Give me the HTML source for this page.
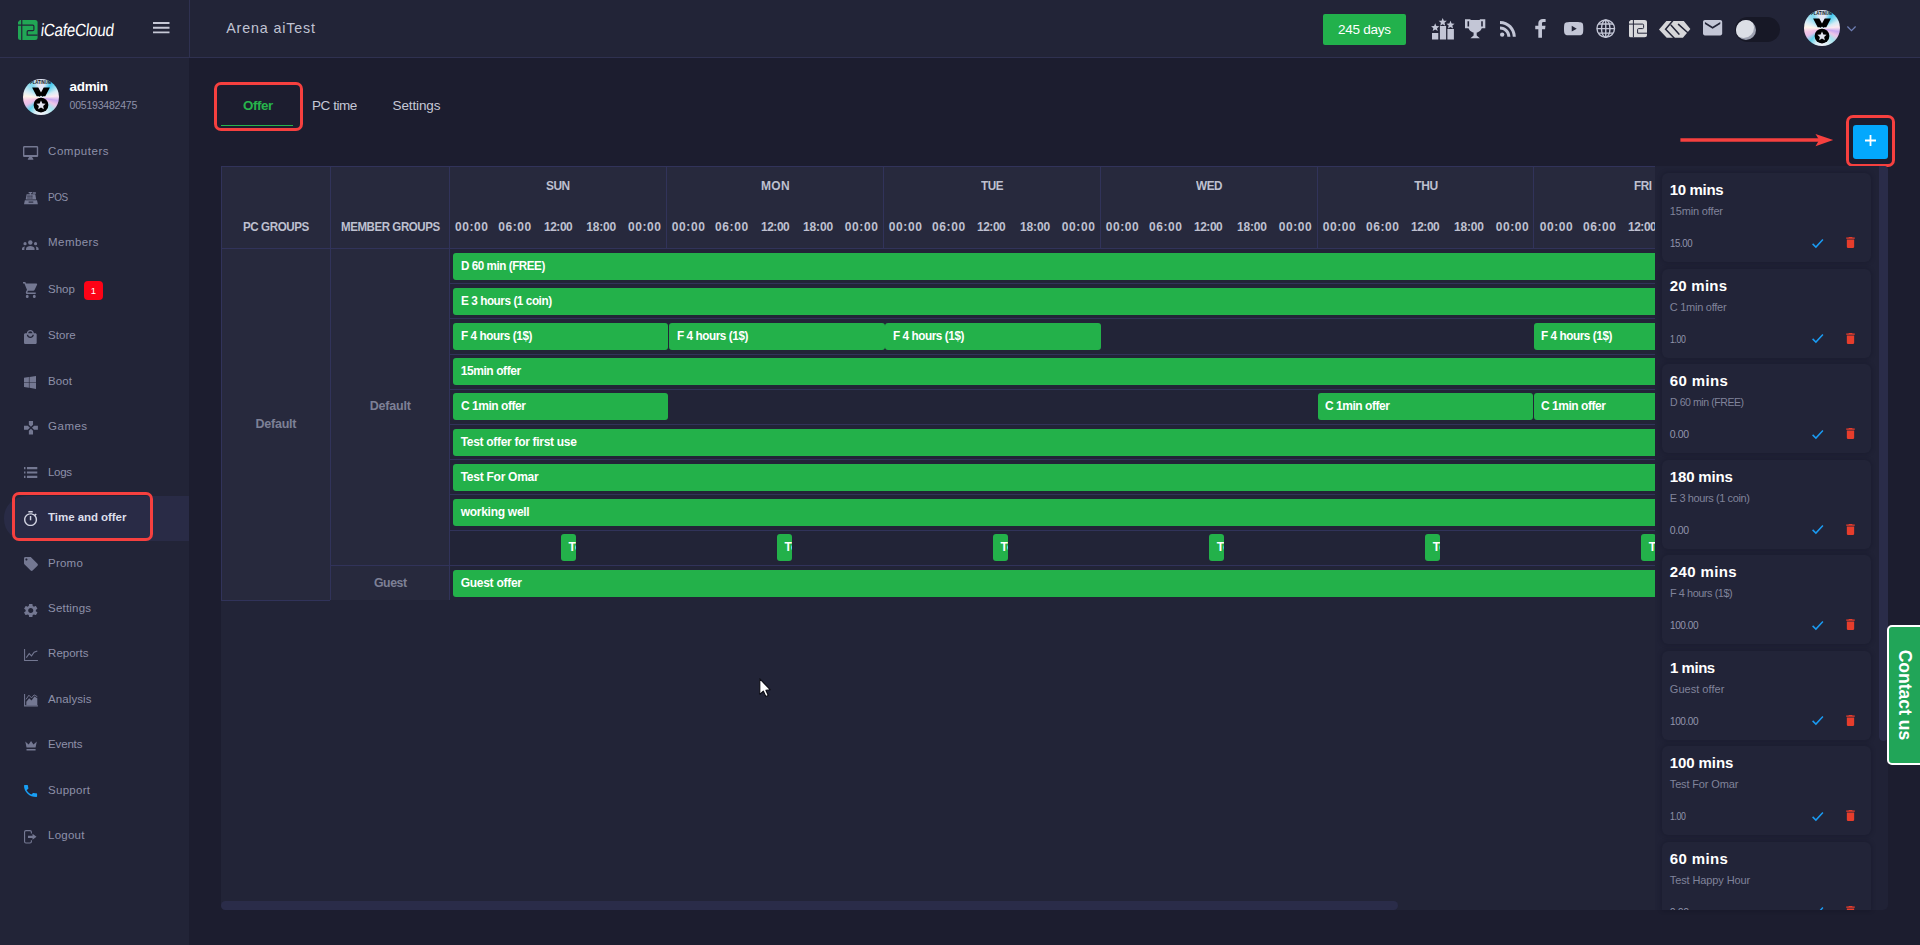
<!DOCTYPE html>
<html lang="en">
<head>
<meta charset="utf-8">
<title>iCafeCloud - Time and offer</title>
<style>
*{box-sizing:border-box;margin:0;padding:0}
html,body{width:1920px;height:945px;overflow:hidden;background:#1c1d2f;font-family:"Liberation Sans",sans-serif;color:#c6c8d6}
.a{position:absolute}
.t{position:absolute;white-space:nowrap}
svg{position:absolute;overflow:visible}
#top{position:absolute;left:0;top:0;width:1920px;height:58px;background:#222437;border-bottom:1px solid #2f3150}
#side{position:absolute;left:0;top:58px;width:189px;height:887px;background:#222437}
#topdiv{position:absolute;left:189px;top:0;width:1px;height:57px;background:#2f3150}
#panel{position:absolute;left:221px;top:166px;width:1434px;height:744px;background:#222437;overflow:hidden;border-radius:4px 0 0 4px}
.hd{position:absolute;background:#27293d}
.vl{position:absolute;width:1px;background:#31335a}
.hl{position:absolute;height:1px;background:#31335a}
.bar{position:absolute;height:27px;background:#23b14a;border-radius:3px;overflow:hidden}
#offers{position:absolute;left:1655px;top:166px;width:233px;height:744px;background:#202236;overflow:hidden;border-radius:0 5px 5px 0}
.card{position:absolute;left:7px;width:209px;height:89px;background:#222438;border-radius:6px;box-shadow:0 0 5px rgba(10,10,25,.32)}
.red{position:absolute;border:3px solid #f6403f;border-radius:7px}
</style>
</head>
<body>
<div id="top"></div><div id="side"></div><div id="topdiv"></div>
<svg style="left:17.800px;top:19.900px" width="19.600" height="20" viewBox="0 0 19.600 20"><path d="M2 0H17.100Q19.600 0 19.600 2.500V17.500Q19.600 20 17.100 20H2.500Q0 20 0 17.500V2z" fill="#21a655"/><path d="M3.750 0V20M0 5.200H14.800Q15.900 5.200 15.900 6.300V9.500Q15.900 10.600 14.800 10.600H10.300Q9.200 10.600 9.200 11.700V15.100H19.600" fill="none" stroke="#222437" stroke-width="1.200"/></svg>
<div class="t" style="left:39.80px;top:18px;font-size:17.5px;line-height:24px;color:#fff;letter-spacing:-0.298px;transform:scaleX(.875) skewX(-7deg);transform-origin:0 80%;">iCafeCloud</div>
<svg style="left:153px;top:22px" width="17" height="12" viewBox="0 0 17 12"><path d="M0 1h16.5M0 5.7h16.5M0 10.4h16.5" stroke="#c6c8d6" stroke-width="1.9"/></svg>
<div class="t" style="left:226.20px;top:18px;font-size:14.3px;line-height:20px;color:#c0c3d3;letter-spacing:0.847px;">Arena aiTest</div>
<div class="t" style="left:69.50px;top:77px;font-size:13.5px;line-height:19px;color:#fff;font-weight:bold;letter-spacing:-0.314px;">admin</div>
<div class="t" style="left:69.50px;top:97px;font-size:10.5px;line-height:16px;color:#8e91a9;letter-spacing:-0.207px;">005193482475</div>
<div class="a" style="left:4px;top:496px;width:185px;height:45px;background:#292b46;border-radius:22px 0 0 22px"></div>
<div class="t" style="left:48.10px;top:143px;font-size:11.5px;line-height:16px;color:#8e91a9;letter-spacing:0.520px;">Computers</div>
<div class="t" style="left:48.10px;top:189px;font-size:11.5px;line-height:16px;color:#8e91a9;letter-spacing:-0.450px;transform:scaleX(0.8638);transform-origin:0 50%;">POS</div>
<div class="t" style="left:48.10px;top:234px;font-size:11.5px;line-height:16px;color:#8e91a9;letter-spacing:0.429px;">Members</div>
<div class="t" style="left:48.10px;top:281px;font-size:11.5px;line-height:16px;color:#8e91a9;letter-spacing:-0.053px;">Shop</div>
<div class="t" style="left:48.10px;top:327px;font-size:11.5px;line-height:16px;color:#8e91a9;letter-spacing:0.028px;">Store</div>
<div class="t" style="left:48.10px;top:373px;font-size:11.5px;line-height:16px;color:#8e91a9;letter-spacing:0.048px;">Boot</div>
<div class="t" style="left:48.10px;top:418px;font-size:11.5px;line-height:16px;color:#8e91a9;letter-spacing:0.483px;">Games</div>
<div class="t" style="left:48.10px;top:464px;font-size:11.5px;line-height:16px;color:#8e91a9;letter-spacing:-0.379px;">Logs</div>
<div class="t" style="left:48.10px;top:509px;font-size:11.5px;line-height:16px;color:#dcdeea;font-weight:bold;letter-spacing:-0.056px;">Time and offer</div>
<div class="t" style="left:48.10px;top:555px;font-size:11.5px;line-height:16px;color:#8e91a9;letter-spacing:0.207px;">Promo</div>
<div class="t" style="left:48.10px;top:600px;font-size:11.5px;line-height:16px;color:#8e91a9;letter-spacing:0.192px;">Settings</div>
<div class="t" style="left:48.10px;top:645px;font-size:11.5px;line-height:16px;color:#8e91a9;letter-spacing:0.005px;">Reports</div>
<div class="t" style="left:48.10px;top:691px;font-size:11.5px;line-height:16px;color:#8e91a9;letter-spacing:0.083px;">Analysis</div>
<div class="t" style="left:48.10px;top:736px;font-size:11.5px;line-height:16px;color:#8e91a9;letter-spacing:-0.171px;">Events</div>
<div class="t" style="left:48.10px;top:782px;font-size:11.5px;line-height:16px;color:#8e91a9;letter-spacing:0.270px;">Support</div>
<div class="t" style="left:48.10px;top:827px;font-size:11.5px;line-height:16px;color:#8e91a9;letter-spacing:0.225px;">Logout</div>
<div class="red" style="left:12px;top:492px;width:141px;height:49px"></div>
<div class="a" style="left:84px;top:281px;width:19px;height:19px;background:#fd0316;border-radius:4px"></div>
<div class="t" style="left:90.76px;top:283px;font-size:9.5px;line-height:15px;color:#fff;">1</div>
<svg style="left:23.0px;top:146.0px" width="15.2" height="13.8" viewBox="1 2 22 20" preserveAspectRatio="none" fill="#747892"><path d="M21 2H3c-1.1 0-2 .9-2 2v12c0 1.1.9 2 2 2h7l-2 3v1h8v-1l-2-3h7c1.1 0 2-.9 2-2V4c0-1.1-.9-2-2-2zm0 13H3V4h18v11z"/></svg>
<svg style="left:23.7px;top:191.8px" width="13.9" height="12.2" viewBox="0 0 24 21" preserveAspectRatio="none" fill="#747892"><path d="M8 0h6v2.2h-2V4h7.5l1.6 9H2.9l1.6-9H10V2.200H8zM6 6v2h2V6zm3.300 0v2h2V6zM12.600 6v2h2V6zM6 9.300v2h2v-2zm3.300 0v2h2v-2zm3.300 0v2h2v-2zM15 0.500h5.500v2.500H15zM1.500 14.200h21L24 21H0z"/><rect x="8" y="16.500" width="8" height="1.800" fill="#222437"/></svg>
<svg style="left:22.4px;top:239.8px" width="16.6" height="9.9" viewBox="0 0 24 14" preserveAspectRatio="none" fill="#747892"><circle cx="12" cy="3.600" r="3.200"/><path d="M5.800 14v-1.700c0-2.400 3.500-3.900 6.200-3.900s6.200 1.500 6.200 3.900V14z"/><circle cx="4.400" cy="5.300" r="2.300"/><circle cx="19.600" cy="5.300" r="2.300"/><path d="M0 14v-1.500c0-1.900 2-3 4.300-3.200-.6.800-.9 1.800-.9 3V14zM24 14v-1.500c0-1.900-2-3-4.300-3.200.6.800.9 1.800.9 3V14z"/></svg>
<svg style="left:23.0px;top:281.5px" width="14.5" height="16.0" viewBox="1 2 20.500 20" preserveAspectRatio="none" fill="#747892"><path d="M7 18c-1.100 0-1.990.9-1.990 2S5.900 22 7 22s2-.9 2-2-.9-2-2-2zM1 2v2h2l3.600 7.590-1.350 2.450c-.16.280-.25.610-.25.960 0 1.100.9 2 2 2h12v-2H7.420c-.14 0-.25-.11-.25-.25l.03-.12.9-1.630h7.450c.75 0 1.410-.41 1.750-1.030l3.580-6.490c.08-.14.120-.31.120-.48 0-.55-.45-1-1-1H5.210l-.94-2H1zm16 16c-1.100 0-1.990.9-1.990 2s.89 2 1.990 2 2-.9 2-2-.9-2-2-2z"/></svg>
<svg style="left:24.3px;top:329.9px" width="12.7" height="14.1" viewBox="3 1 18 21" preserveAspectRatio="none" fill="#747892"><path d="M19 6h-2c0-2.760-2.240-5-5-5S7 3.240 7 6H5c-1.100 0-1.990.9-1.990 2L3 20c0 1.100.9 2 2 2h14c1.100 0 2-.9 2-2V8c0-1.100-.9-2-2-2zm-7-3c1.660 0 3 1.340 3 3H9c0-1.660 1.340-3 3-3zm0 10c-2.760 0-5-2.240-5-5h2c0 1.660 1.340 3 3 3s3-1.340 3-3h2c0 2.760-2.240 5-5 5z"/></svg>
<svg style="left:24.3px;top:376.0px" width="12.0" height="12.9" viewBox="0 0 24 24" preserveAspectRatio="none" fill="#747892"><path d="M0 3.400L9.800 2v9.500H0zM11 1.900L24 0v11.500H11zM0 12.600h9.800V22L0 20.600zM11 12.600h13V24l-13-1.900z"/></svg>
<svg style="left:23.7px;top:421.1px" width="13.9" height="13.5" viewBox="2 2 20 20" preserveAspectRatio="none" fill="#747892"><path d="M15 7.500V2H9v5.500l3 3 3-3zM7.500 9H2v6h5.500l3-3-3-3zM9 16.500V22h6v-5.500l-3-3-3 3zM16.500 9l-3 3 3 3H22V9h-5.500z"/></svg>
<svg style="left:23.7px;top:467.4px" width="13.3" height="11.0" viewBox="3 7 18 10" preserveAspectRatio="none" fill="#747892"><path d="M3 13h2v-2H3v2zm0 4h2v-2H3v2zm0-8h2V7H3v2zm4 4h14v-2H7v2zm0 4h14v-2H7v2zM7 7v2h14V7H7z"/></svg>
<svg style="left:24.1px;top:510.7px" width="13.1" height="15.1" viewBox="3 1 18 21" preserveAspectRatio="none" fill="#d0d2e0"><path d="M15 1H9v2h6V1zm-4 13h2V8h-2v6zm8.030-6.610l1.420-1.420c-.43-.51-.9-.99-1.410-1.410l-1.420 1.420C16.070 4.740 14.120 4 12 4c-4.970 0-9 4.030-9 9s4.020 9 9 9 9-4.030 9-9c0-2.120-.74-4.070-1.970-5.610zM12 20c-3.870 0-7-3.130-7-7s3.130-7 7-7 7 3.130 7 7-3.130 7-7 7z"/></svg>
<svg style="left:23.7px;top:557.0px" width="13.9" height="14.0" viewBox="2 2 20 20" preserveAspectRatio="none" fill="#747892"><path d="M21.410 11.580l-9-9C12.050 2.220 11.550 2 11 2H4c-1.100 0-2 .9-2 2v7c0 .55.22 1.050.59 1.420l9 9c.36.36.86.58 1.410.58.55 0 1.050-.22 1.410-.59l7-7c.37-.36.59-.86.59-1.410 0-.55-.23-1.060-.59-1.420zM5.500 7C4.670 7 4 6.330 4 5.500S4.670 4 5.500 4 7 4.670 7 5.500 6.330 7 5.500 7z"/></svg>
<svg style="left:23.7px;top:603.6px" width="13.5" height="13.1" viewBox="2.500 2.400 19 19.200" preserveAspectRatio="none" fill="#747892"><path d="M19.140 12.940c.04-.3.060-.61.060-.94 0-.32-.02-.64-.07-.94l2.030-1.580c.18-.14.23-.41.120-.61l-1.920-3.320c-.12-.22-.37-.29-.59-.22l-2.390.96c-.5-.38-1.030-.7-1.620-.94l-.36-2.540c-.04-.24-.24-.41-.48-.41h-3.840c-.24 0-.43.17-.47.41l-.36 2.540c-.59.24-1.130.57-1.620.94l-2.390-.96c-.22-.08-.47 0-.59.22L2.740 8.870c-.12.210-.08.470.12.610l2.030 1.580c-.05.3-.09.630-.09.940s.02.640.07.940l-2.030 1.580c-.18.14-.23.410-.12.610l1.920 3.320c.12.220.37.290.59.220l2.390-.96c.5.380 1.030.7 1.620.94l.36 2.540c.05.240.24.410.48.410h3.840c.24 0 .44-.17.47-.41l.36-2.540c.59-.24 1.130-.56 1.620-.94l2.390.96c.22.080.47 0 .59-.22l1.920-3.320c.12-.22.07-.47-.12-.61l-2.010-1.580zM12 15.600c-1.980 0-3.600-1.620-3.600-3.600s1.620-3.600 3.600-3.600 3.600 1.620 3.600 3.600-1.620 3.600-3.600 3.600z"/></svg>
<svg style="left:23.7px;top:648.8px" width="13.9" height="12.1" viewBox="0 0 24 21" preserveAspectRatio="none" fill="#747892"><path d="M1 0v20h23" fill="none" stroke="#747892" stroke-width="1.800"/><path d="M4 15l5-7 4 4 4.500-6.500L23 3.500" fill="none" stroke="#747892" stroke-width="1.800"/></svg>
<svg style="left:23.7px;top:693.7px" width="13.9" height="12.5" viewBox="0 0 24 21" preserveAspectRatio="none" fill="#747892"><path d="M1 0v20h23" fill="none" stroke="#747892" stroke-width="1.800"/><path d="M4 19V13l5-6 4 4 5-7 5 3v12z"/><path d="M3.500 9l5-7 4.500 4.500 4.500-5 5.500 3" fill="none" stroke="#747892" stroke-width="1.600"/></svg>
<svg style="left:24.5px;top:741.4px" width="12.1" height="10.0" viewBox="2 4 20 17" preserveAspectRatio="none" fill="#747892"><path d="M4.500 15L2.500 5 8 9.800 12 4l4 5.800L21.500 5l-2 10zM4.500 17.500h15V20h-15z"/></svg>
<svg style="left:23.7px;top:785.0px" width="13.1" height="12.0" viewBox="3 3 18 18" preserveAspectRatio="none" fill="#189ff5"><path d="M6.620 10.790c1.440 2.830 3.760 5.140 6.590 6.590l2.200-2.200c.27-.27.67-.36 1.020-.24 1.120.37 2.330.57 3.570.57.55 0 1 .45 1 1V20c0 .55-.45 1-1 1-9.390 0-17-7.610-17-17 0-.55.45-1 1-1h3.500c.55 0 1 .45 1 1 0 1.250.2 2.450.57 3.570.110.35.03.74-.25 1.020l-2.200 2.200z"/></svg>
<svg style="left:24.1px;top:829.8px" width="12.5" height="13.5" viewBox="0 0 22 24" preserveAspectRatio="none" fill="#747892"><path d="M13 6V3.500Q13 1 10.500 1H3.500Q1 1 1 3.500v17Q1 23 3.500 23h7q2.500 0 2.500-2.500V18" fill="none" stroke="#747892" stroke-width="2"/><path d="M7 10h8V6.500l7 5.500-7 5.500V14H7z"/></svg>
<div class="t" style="left:242.60px;top:96px;font-size:13.5px;line-height:19px;color:#27b34b;font-weight:bold;letter-spacing:-0.450px;transform:scaleX(0.9884);transform-origin:0 50%;">Offer</div>
<div class="t" style="left:311.50px;top:96px;font-size:13.5px;line-height:19px;color:#c6c8d6;letter-spacing:-0.450px;transform:scaleX(0.9998);transform-origin:0 50%;">PC time</div>
<div class="t" style="left:392.60px;top:96px;font-size:13.5px;line-height:19px;color:#c6c8d6;letter-spacing:-0.140px;">Settings</div>
<div class="a" style="left:221px;top:125px;width:72px;height:1px;background:#27b34b"></div>
<div class="red" style="left:214px;top:82px;width:89px;height:49px"></div>
<div class="a" style="left:1853px;top:125px;width:35px;height:34px;background:#03a8fd;border-radius:3px"></div>
<svg style="left:1865px;top:135px" width="11" height="11" viewBox="0 0 11 11"><path d="M5.500 0v11M0 5.500h11" stroke="#fff" stroke-width="1.800"/></svg>
<div class="red" style="left:1846px;top:115px;width:49px;height:52px"></div>
<svg style="left:1680px;top:130px" width="160" height="20" viewBox="0 0 160 20"><path d="M0.400 10H140" stroke="#f6403f" stroke-width="3.400"/><path d="M135.500 3.900L153.200 10 135.500 16.200 139.200 10z" fill="#f6403f"/></svg>
<div id="panel"></div>
<div class="hd" style="left:221px;top:166px;width:1434px;height:82.0px"></div>
<div class="hd" style="left:221px;top:166px;width:228.5px;height:434.0px"></div>
<div class="vl" style="left:221.0px;top:166px;height:434.0px"></div>
<div class="vl" style="left:330.2px;top:166px;height:434.0px"></div>
<div class="vl" style="left:449.4px;top:166px;height:434.0px"></div>
<div class="vl" style="left:666.0px;top:166px;height:82.0px"></div>
<div class="vl" style="left:883.0px;top:166px;height:82.0px"></div>
<div class="vl" style="left:1100.0px;top:166px;height:82.0px"></div>
<div class="vl" style="left:1317.0px;top:166px;height:82.0px"></div>
<div class="vl" style="left:1533.0px;top:166px;height:82.0px"></div>
<div class="hl" style="left:221px;top:166px;width:1434px"></div>
<div class="hl" style="left:221px;top:248.0px;width:1434px"></div>
<div class="hl" style="left:449.4px;top:283.0px;width:1205.6px"></div>
<div class="hl" style="left:449.4px;top:318.0px;width:1205.6px"></div>
<div class="hl" style="left:449.4px;top:354.0px;width:1205.6px"></div>
<div class="hl" style="left:449.4px;top:389.0px;width:1205.6px"></div>
<div class="hl" style="left:449.4px;top:424.0px;width:1205.6px"></div>
<div class="hl" style="left:449.4px;top:459.0px;width:1205.6px"></div>
<div class="hl" style="left:449.4px;top:494.0px;width:1205.6px"></div>
<div class="hl" style="left:449.4px;top:530.0px;width:1205.6px"></div>
<div class="hl" style="left:330.2px;top:565.0px;width:1324.8px"></div>
<div class="hl" style="left:221px;top:600px;width:109.2px"></div>
<div class="t" style="left:243.20px;top:218px;font-size:12.5px;line-height:18px;color:#bec0d0;font-weight:bold;letter-spacing:-0.450px;transform:scaleX(0.9284);transform-origin:0 50%;">PC GROUPS</div>
<div class="t" style="left:340.70px;top:218px;font-size:12.5px;line-height:18px;color:#bec0d0;font-weight:bold;letter-spacing:-0.450px;transform:scaleX(0.9193);transform-origin:0 50%;">MEMBER GROUPS</div>
<div class="t" style="left:546.27px;top:177px;font-size:12px;line-height:18px;color:#bec0d0;font-weight:bold;letter-spacing:-0.450px;transform:scaleX(0.9903);transform-origin:0 50%;">SUN</div>
<div class="t" style="left:454.92px;top:218px;font-size:12px;line-height:18px;color:#bec0d0;font-weight:bold;letter-spacing:0.577px;">00:00</div>
<div class="t" style="left:498.17px;top:218px;font-size:12px;line-height:18px;color:#bec0d0;font-weight:bold;letter-spacing:0.577px;">06:00</div>
<div class="t" style="left:543.57px;top:218px;font-size:12px;line-height:18px;color:#bec0d0;font-weight:bold;letter-spacing:-0.450px;transform:scaleX(0.9934);transform-origin:0 50%;">12:00</div>
<div class="t" style="left:586.17px;top:218px;font-size:12px;line-height:18px;color:#bec0d0;font-weight:bold;letter-spacing:-0.173px;">18:00</div>
<div class="t" style="left:627.92px;top:218px;font-size:12px;line-height:18px;color:#bec0d0;font-weight:bold;letter-spacing:0.577px;">00:00</div>
<div class="t" style="left:761.07px;top:177px;font-size:12px;line-height:18px;color:#bec0d0;font-weight:bold;letter-spacing:0.252px;">MON</div>
<div class="t" style="left:671.87px;top:218px;font-size:12px;line-height:18px;color:#bec0d0;font-weight:bold;letter-spacing:0.577px;">00:00</div>
<div class="t" style="left:715.12px;top:218px;font-size:12px;line-height:18px;color:#bec0d0;font-weight:bold;letter-spacing:0.577px;">06:00</div>
<div class="t" style="left:760.52px;top:218px;font-size:12px;line-height:18px;color:#bec0d0;font-weight:bold;letter-spacing:-0.450px;transform:scaleX(0.9934);transform-origin:0 50%;">12:00</div>
<div class="t" style="left:803.12px;top:218px;font-size:12px;line-height:18px;color:#bec0d0;font-weight:bold;letter-spacing:-0.173px;">18:00</div>
<div class="t" style="left:844.87px;top:218px;font-size:12px;line-height:18px;color:#bec0d0;font-weight:bold;letter-spacing:0.577px;">00:00</div>
<div class="t" style="left:981.02px;top:177px;font-size:12px;line-height:18px;color:#bec0d0;font-weight:bold;letter-spacing:-0.450px;transform:scaleX(0.9740);transform-origin:0 50%;">TUE</div>
<div class="t" style="left:888.82px;top:218px;font-size:12px;line-height:18px;color:#bec0d0;font-weight:bold;letter-spacing:0.577px;">00:00</div>
<div class="t" style="left:932.07px;top:218px;font-size:12px;line-height:18px;color:#bec0d0;font-weight:bold;letter-spacing:0.577px;">06:00</div>
<div class="t" style="left:977.47px;top:218px;font-size:12px;line-height:18px;color:#bec0d0;font-weight:bold;letter-spacing:-0.450px;transform:scaleX(0.9934);transform-origin:0 50%;">12:00</div>
<div class="t" style="left:1020.07px;top:218px;font-size:12px;line-height:18px;color:#bec0d0;font-weight:bold;letter-spacing:-0.173px;">18:00</div>
<div class="t" style="left:1061.82px;top:218px;font-size:12px;line-height:18px;color:#bec0d0;font-weight:bold;letter-spacing:0.577px;">00:00</div>
<div class="t" style="left:1195.97px;top:177px;font-size:12px;line-height:18px;color:#bec0d0;font-weight:bold;letter-spacing:-0.450px;transform:scaleX(0.9780);transform-origin:0 50%;">WED</div>
<div class="t" style="left:1105.78px;top:218px;font-size:12px;line-height:18px;color:#bec0d0;font-weight:bold;letter-spacing:0.577px;">00:00</div>
<div class="t" style="left:1149.03px;top:218px;font-size:12px;line-height:18px;color:#bec0d0;font-weight:bold;letter-spacing:0.577px;">06:00</div>
<div class="t" style="left:1194.43px;top:218px;font-size:12px;line-height:18px;color:#bec0d0;font-weight:bold;letter-spacing:-0.450px;transform:scaleX(0.9934);transform-origin:0 50%;">12:00</div>
<div class="t" style="left:1237.03px;top:218px;font-size:12px;line-height:18px;color:#bec0d0;font-weight:bold;letter-spacing:-0.173px;">18:00</div>
<div class="t" style="left:1278.78px;top:218px;font-size:12px;line-height:18px;color:#bec0d0;font-weight:bold;letter-spacing:0.577px;">00:00</div>
<div class="t" style="left:1414.17px;top:177px;font-size:12px;line-height:18px;color:#bec0d0;font-weight:bold;letter-spacing:-0.331px;">THU</div>
<div class="t" style="left:1322.72px;top:218px;font-size:12px;line-height:18px;color:#bec0d0;font-weight:bold;letter-spacing:0.577px;">00:00</div>
<div class="t" style="left:1365.97px;top:218px;font-size:12px;line-height:18px;color:#bec0d0;font-weight:bold;letter-spacing:0.577px;">06:00</div>
<div class="t" style="left:1411.38px;top:218px;font-size:12px;line-height:18px;color:#bec0d0;font-weight:bold;letter-spacing:-0.450px;transform:scaleX(0.9934);transform-origin:0 50%;">12:00</div>
<div class="t" style="left:1453.97px;top:218px;font-size:12px;line-height:18px;color:#bec0d0;font-weight:bold;letter-spacing:-0.173px;">18:00</div>
<div class="t" style="left:1495.72px;top:218px;font-size:12px;line-height:18px;color:#bec0d0;font-weight:bold;letter-spacing:0.577px;">00:00</div>
<div class="t" style="left:1634.12px;top:177px;font-size:12px;line-height:18px;color:#bec0d0;font-weight:bold;letter-spacing:-0.450px;transform:scaleX(0.9767);transform-origin:0 50%;">FRI</div>
<div class="t" style="left:1539.68px;top:218px;font-size:12px;line-height:18px;color:#bec0d0;font-weight:bold;letter-spacing:0.577px;">00:00</div>
<div class="t" style="left:1582.93px;top:218px;font-size:12px;line-height:18px;color:#bec0d0;font-weight:bold;letter-spacing:0.577px;">06:00</div>
<div class="t" style="left:1628.33px;top:218px;font-size:12px;line-height:18px;color:#bec0d0;font-weight:bold;letter-spacing:-0.450px;transform:scaleX(0.9934);transform-origin:0 50%;">12:00</div>
<div class="t" style="left:255.50px;top:415px;font-size:12.5px;line-height:18px;color:#7d8096;font-weight:bold;letter-spacing:-0.227px;">Default</div>
<div class="t" style="left:369.80px;top:397px;font-size:12.5px;line-height:18px;color:#7d8096;font-weight:bold;letter-spacing:-0.227px;">Default</div>
<div class="t" style="left:373.90px;top:574px;font-size:12.5px;line-height:18px;color:#7d8096;font-weight:bold;letter-spacing:-0.450px;transform:scaleX(0.9814);transform-origin:0 50%;">Guest</div>
<div class="bar" style="left:453.2px;top:253.0px;width:1246.8px"></div>
<div class="t" style="left:460.70px;top:257px;font-size:12px;line-height:18px;color:#fff;font-weight:bold;letter-spacing:-0.450px;transform:scaleX(0.9685);transform-origin:0 50%;">D 60 min (FREE)</div>
<div class="bar" style="left:453.2px;top:288.0px;width:1246.8px"></div>
<div class="t" style="left:460.70px;top:292px;font-size:12px;line-height:18px;color:#fff;font-weight:bold;letter-spacing:-0.450px;transform:scaleX(0.9792);transform-origin:0 50%;">E 3 hours (1 coin)</div>
<div class="bar" style="left:453.2px;top:323.0px;width:215.3px"></div>
<div class="t" style="left:460.70px;top:327px;font-size:12px;line-height:18px;color:#fff;font-weight:bold;letter-spacing:-0.450px;transform:scaleX(0.9804);transform-origin:0 50%;">F 4 hours (1$)</div>
<div class="bar" style="left:669.3px;top:323.0px;width:215.3px"></div>
<div class="t" style="left:676.77px;top:327px;font-size:12px;line-height:18px;color:#fff;font-weight:bold;letter-spacing:-0.450px;transform:scaleX(0.9804);transform-origin:0 50%;">F 4 hours (1$)</div>
<div class="bar" style="left:885.3px;top:323.0px;width:215.3px"></div>
<div class="t" style="left:892.84px;top:327px;font-size:12px;line-height:18px;color:#fff;font-weight:bold;letter-spacing:-0.450px;transform:scaleX(0.9804);transform-origin:0 50%;">F 4 hours (1$)</div>
<div class="bar" style="left:1533.5px;top:323.0px;width:166.5px"></div>
<div class="t" style="left:1541.05px;top:327px;font-size:12px;line-height:18px;color:#fff;font-weight:bold;letter-spacing:-0.450px;transform:scaleX(0.9804);transform-origin:0 50%;">F 4 hours (1$)</div>
<div class="bar" style="left:453.2px;top:358.0px;width:1246.8px"></div>
<div class="t" style="left:460.70px;top:362px;font-size:12px;line-height:18px;color:#fff;font-weight:bold;letter-spacing:-0.418px;">15min offer</div>
<div class="bar" style="left:453.2px;top:393.0px;width:215.3px"></div>
<div class="t" style="left:460.70px;top:397px;font-size:12px;line-height:18px;color:#fff;font-weight:bold;letter-spacing:-0.450px;transform:scaleX(0.9976);transform-origin:0 50%;">C 1min offer</div>
<div class="bar" style="left:1317.5px;top:393.0px;width:215.3px"></div>
<div class="t" style="left:1324.98px;top:397px;font-size:12px;line-height:18px;color:#fff;font-weight:bold;letter-spacing:-0.450px;transform:scaleX(0.9976);transform-origin:0 50%;">C 1min offer</div>
<div class="bar" style="left:1533.5px;top:393.0px;width:166.5px"></div>
<div class="t" style="left:1541.05px;top:397px;font-size:12px;line-height:18px;color:#fff;font-weight:bold;letter-spacing:-0.450px;transform:scaleX(0.9976);transform-origin:0 50%;">C 1min offer</div>
<div class="bar" style="left:453.2px;top:429.0px;width:1246.8px"></div>
<div class="t" style="left:460.70px;top:433px;font-size:12px;line-height:18px;color:#fff;font-weight:bold;letter-spacing:-0.301px;">Test offer for first use</div>
<div class="bar" style="left:453.2px;top:464.0px;width:1246.8px"></div>
<div class="t" style="left:460.70px;top:468px;font-size:12px;line-height:18px;color:#fff;font-weight:bold;letter-spacing:-0.261px;">Test For Omar</div>
<div class="bar" style="left:453.2px;top:499.0px;width:1246.8px"></div>
<div class="t" style="left:460.70px;top:503px;font-size:12px;line-height:18px;color:#fff;font-weight:bold;letter-spacing:-0.274px;">working well</div>
<div class="bar" style="left:560.9px;top:534.0px;width:15.0px"><span style="position:absolute;left:7.600px;top:6px;font-size:12px;line-height:15px;font-weight:bold;color:#fff;white-space:nowrap">Test</span></div>
<div class="bar" style="left:777.0px;top:534.0px;width:15.0px"><span style="position:absolute;left:7.600px;top:6px;font-size:12px;line-height:15px;font-weight:bold;color:#fff;white-space:nowrap">Test</span></div>
<div class="bar" style="left:993.0px;top:534.0px;width:15.0px"><span style="position:absolute;left:7.600px;top:6px;font-size:12px;line-height:15px;font-weight:bold;color:#fff;white-space:nowrap">Test</span></div>
<div class="bar" style="left:1209.1px;top:534.0px;width:15.0px"><span style="position:absolute;left:7.600px;top:6px;font-size:12px;line-height:15px;font-weight:bold;color:#fff;white-space:nowrap">Test</span></div>
<div class="bar" style="left:1425.1px;top:534.0px;width:15.0px"><span style="position:absolute;left:7.600px;top:6px;font-size:12px;line-height:15px;font-weight:bold;color:#fff;white-space:nowrap">Test</span></div>
<div class="bar" style="left:1641.2px;top:534.0px;width:15.0px"><span style="position:absolute;left:7.600px;top:6px;font-size:12px;line-height:15px;font-weight:bold;color:#fff;white-space:nowrap">Test</span></div>
<div class="bar" style="left:453.2px;top:570.0px;width:1246.8px"></div>
<div class="t" style="left:460.70px;top:574px;font-size:12px;line-height:18px;color:#fff;font-weight:bold;letter-spacing:-0.271px;">Guest offer</div>
<div class="a" style="left:221px;top:901px;width:1177px;height:9px;background:#2a2c49;border-radius:5px"></div>
<div id="offers"></div>
<div class="a" style="left:1879px;top:166px;width:9px;height:574.500px;background:#2a2c49;border-radius:0 4px 5px 5px"></div>
<div class="card" style="left:1662px;top:173.0px;height:89.0px;border-radius:6px"></div>
<div class="t" style="left:1669.80px;top:179px;font-size:15px;line-height:21px;color:#fff;font-weight:bold;letter-spacing:-0.344px;">10 mins</div>
<div class="t" style="left:1669.80px;top:203px;font-size:11px;line-height:16px;color:#80839a;letter-spacing:-0.163px;">15min offer</div>
<div class="t" style="left:1669.80px;top:235px;font-size:10.5px;line-height:16px;color:#9194ab;letter-spacing:-0.450px;transform:scaleX(0.9193);transform-origin:0 50%;">15.00</div>
<svg style="left:1812px;top:238.5px" width="11.500" height="8.800" viewBox="0 0 11.500 8.800"><path d="M0.600 4.900l3.300 3.200L10.900 0.600" fill="none" stroke="#1a9bf3" stroke-width="1.500"/></svg>
<svg style="left:1845.600px;top:237.0px" width="9" height="11" viewBox="0 0 14 18" fill="#e63d2c"><path d="M1 16c0 1.100.9 2 2 2h8c1.100 0 2-.9 2-2V4H1v12zM14 1h-3.500l-1-1h-5l-1 1H0v2h14V1z"/></svg>
<div class="card" style="left:1662px;top:268.6px;height:89.0px;border-radius:6px"></div>
<div class="t" style="left:1669.80px;top:275px;font-size:15px;line-height:21px;color:#fff;font-weight:bold;letter-spacing:0.223px;">20 mins</div>
<div class="t" style="left:1669.80px;top:299px;font-size:11px;line-height:16px;color:#80839a;letter-spacing:-0.265px;">C 1min offer</div>
<div class="t" style="left:1669.80px;top:331px;font-size:10.5px;line-height:16px;color:#9194ab;letter-spacing:-0.450px;transform:scaleX(0.8383);transform-origin:0 50%;">1.00</div>
<svg style="left:1812px;top:334.1px" width="11.500" height="8.800" viewBox="0 0 11.500 8.800"><path d="M0.600 4.900l3.300 3.200L10.900 0.600" fill="none" stroke="#1a9bf3" stroke-width="1.500"/></svg>
<svg style="left:1845.600px;top:332.6px" width="9" height="11" viewBox="0 0 14 18" fill="#e63d2c"><path d="M1 16c0 1.100.9 2 2 2h8c1.100 0 2-.9 2-2V4H1v12zM14 1h-3.500l-1-1h-5l-1 1H0v2h14V1z"/></svg>
<div class="card" style="left:1662px;top:364.1px;height:89.0px;border-radius:6px"></div>
<div class="t" style="left:1669.80px;top:370px;font-size:15px;line-height:21px;color:#fff;font-weight:bold;letter-spacing:0.356px;">60 mins</div>
<div class="t" style="left:1669.80px;top:394px;font-size:11px;line-height:16px;color:#80839a;letter-spacing:-0.450px;transform:scaleX(0.9569);transform-origin:0 50%;">D 60 min (FREE)</div>
<div class="t" style="left:1669.80px;top:426px;font-size:10.5px;line-height:16px;color:#9194ab;letter-spacing:-0.345px;">0.00</div>
<svg style="left:1812px;top:429.6px" width="11.500" height="8.800" viewBox="0 0 11.500 8.800"><path d="M0.600 4.900l3.300 3.200L10.900 0.600" fill="none" stroke="#1a9bf3" stroke-width="1.500"/></svg>
<svg style="left:1845.600px;top:428.1px" width="9" height="11" viewBox="0 0 14 18" fill="#e63d2c"><path d="M1 16c0 1.100.9 2 2 2h8c1.100 0 2-.9 2-2V4H1v12zM14 1h-3.500l-1-1h-5l-1 1H0v2h14V1z"/></svg>
<div class="card" style="left:1662px;top:459.7px;height:89.0px;border-radius:6px"></div>
<div class="t" style="left:1669.80px;top:466px;font-size:15px;line-height:21px;color:#fff;font-weight:bold;letter-spacing:-0.158px;">180 mins</div>
<div class="t" style="left:1669.80px;top:490px;font-size:11px;line-height:16px;color:#80839a;letter-spacing:-0.401px;">E 3 hours (1 coin)</div>
<div class="t" style="left:1669.80px;top:522px;font-size:10.5px;line-height:16px;color:#9194ab;letter-spacing:-0.345px;">0.00</div>
<svg style="left:1812px;top:525.2px" width="11.500" height="8.800" viewBox="0 0 11.500 8.800"><path d="M0.600 4.900l3.300 3.200L10.900 0.600" fill="none" stroke="#1a9bf3" stroke-width="1.500"/></svg>
<svg style="left:1845.600px;top:523.7px" width="9" height="11" viewBox="0 0 14 18" fill="#e63d2c"><path d="M1 16c0 1.100.9 2 2 2h8c1.100 0 2-.9 2-2V4H1v12zM14 1h-3.500l-1-1h-5l-1 1H0v2h14V1z"/></svg>
<div class="card" style="left:1662px;top:555.2px;height:89.0px;border-radius:6px"></div>
<div class="t" style="left:1669.80px;top:561px;font-size:15px;line-height:21px;color:#fff;font-weight:bold;letter-spacing:0.385px;">240 mins</div>
<div class="t" style="left:1669.80px;top:585px;font-size:11px;line-height:16px;color:#80839a;letter-spacing:-0.450px;transform:scaleX(0.9916);transform-origin:0 50%;">F 4 hours (1$)</div>
<div class="t" style="left:1669.80px;top:617px;font-size:10.5px;line-height:16px;color:#9194ab;letter-spacing:-0.450px;transform:scaleX(0.9576);transform-origin:0 50%;">100.00</div>
<svg style="left:1812px;top:620.7px" width="11.500" height="8.800" viewBox="0 0 11.500 8.800"><path d="M0.600 4.900l3.300 3.200L10.900 0.600" fill="none" stroke="#1a9bf3" stroke-width="1.500"/></svg>
<svg style="left:1845.600px;top:619.2px" width="9" height="11" viewBox="0 0 14 18" fill="#e63d2c"><path d="M1 16c0 1.100.9 2 2 2h8c1.100 0 2-.9 2-2V4H1v12zM14 1h-3.500l-1-1h-5l-1 1H0v2h14V1z"/></svg>
<div class="card" style="left:1662px;top:650.8px;height:89.0px;border-radius:6px"></div>
<div class="t" style="left:1669.80px;top:657px;font-size:15px;line-height:21px;color:#fff;font-weight:bold;letter-spacing:-0.450px;transform:scaleX(0.9985);transform-origin:0 50%;">1 mins</div>
<div class="t" style="left:1669.80px;top:681px;font-size:11px;line-height:16px;color:#80839a;letter-spacing:0.028px;">Guest offer</div>
<div class="t" style="left:1669.80px;top:713px;font-size:10.5px;line-height:16px;color:#9194ab;letter-spacing:-0.450px;transform:scaleX(0.9576);transform-origin:0 50%;">100.00</div>
<svg style="left:1812px;top:716.3px" width="11.500" height="8.800" viewBox="0 0 11.500 8.800"><path d="M0.600 4.900l3.300 3.200L10.900 0.600" fill="none" stroke="#1a9bf3" stroke-width="1.500"/></svg>
<svg style="left:1845.600px;top:714.8px" width="9" height="11" viewBox="0 0 14 18" fill="#e63d2c"><path d="M1 16c0 1.100.9 2 2 2h8c1.100 0 2-.9 2-2V4H1v12zM14 1h-3.500l-1-1h-5l-1 1H0v2h14V1z"/></svg>
<div class="card" style="left:1662px;top:746.4px;height:89.0px;border-radius:6px"></div>
<div class="t" style="left:1669.80px;top:752px;font-size:15px;line-height:21px;color:#fff;font-weight:bold;letter-spacing:-0.101px;">100 mins</div>
<div class="t" style="left:1669.80px;top:776px;font-size:11px;line-height:16px;color:#80839a;letter-spacing:-0.149px;">Test For Omar</div>
<div class="t" style="left:1669.80px;top:808px;font-size:10.5px;line-height:16px;color:#9194ab;letter-spacing:-0.450px;transform:scaleX(0.8383);transform-origin:0 50%;">1.00</div>
<svg style="left:1812px;top:811.9px" width="11.500" height="8.800" viewBox="0 0 11.500 8.800"><path d="M0.600 4.900l3.300 3.200L10.900 0.600" fill="none" stroke="#1a9bf3" stroke-width="1.500"/></svg>
<svg style="left:1845.600px;top:810.4px" width="9" height="11" viewBox="0 0 14 18" fill="#e63d2c"><path d="M1 16c0 1.100.9 2 2 2h8c1.100 0 2-.9 2-2V4H1v12zM14 1h-3.500l-1-1h-5l-1 1H0v2h14V1z"/></svg>
<div class="card" style="left:1662px;top:841.9px;height:68.1px;border-radius:6px 6px 0 0"></div>
<div class="t" style="left:1669.80px;top:848px;font-size:15px;line-height:21px;color:#fff;font-weight:bold;letter-spacing:0.356px;">60 mins</div>
<div class="t" style="left:1669.80px;top:872px;font-size:11px;line-height:16px;color:#80839a;letter-spacing:-0.109px;">Test Happy Hour</div>
<div class="a" style="left:1662px;top:841.9px;width:209px;height:68.1px;overflow:hidden"><div class="t" style="left:7.80px;top:62px;font-size:10.5px;line-height:16px;color:#9194ab;letter-spacing:-0.345px;">0.00</div><svg style="left:150px;top:65.500px" width="11.500" height="8.800" viewBox="0 0 11.500 8.800"><path d="M0.600 4.900l3.300 3.200L10.900 0.600" fill="none" stroke="#1a9bf3" stroke-width="1.500"/></svg><svg style="left:183.600px;top:64px" width="9" height="11" viewBox="0 0 14 18" fill="#e63d2c"><path d="M1 16c0 1.100.9 2 2 2h8c1.100 0 2-.9 2-2V4H1v12zM14 1h-3.500l-1-1h-5l-1 1H0v2h14V1z"/></svg></div>
<div class="a" style="left:1887px;top:625px;width:40px;height:140px;background:#21a558;border:2px solid #fff;border-radius:5px 0 0 5px"></div>
<div class="t" style="left:1905.300px;top:695px;font-size:19px;line-height:24px;font-weight:bold;color:#fff;transform:translate(-50%,-50%) rotate(90deg) scaleX(.924);">Contact us</div>
<div class="a" style="left:1322.600px;top:13.800px;width:83.300px;height:31px;background:#22b14c;border-radius:2px"></div>
<div class="t" style="left:1338.10px;top:20px;font-size:13.5px;line-height:19px;color:#fff;letter-spacing:-0.270px;">245 days</div>
<svg style="left:1431.0px;top:17.7px" width="24.0" height="21.4" viewBox="0 0 24 21.400" preserveAspectRatio="none" fill="#c3c6d6"><path d="M1 15.100h6.300V21.400H1zM8.900 8.100h6.200V21.400H8.900zM16.400 10.900h6.500V21.400h-6.500zM4.20 5.30L5.34 8.03L8.29 8.27L6.04 10.20L6.73 13.08L4.20 11.54L1.67 13.08L2.36 10.20L0.11 8.27L3.06 8.03zM11.70 -0.10L12.84 2.63L15.79 2.87L13.54 4.80L14.23 7.68L11.70 6.13L9.17 7.68L9.86 4.80L7.61 2.87L10.56 2.63zM19.50 2.70L20.64 5.43L23.59 5.67L21.34 7.60L22.03 10.48L19.50 8.94L16.97 10.48L17.66 7.60L15.41 5.67L18.36 5.43z"/></svg>
<svg style="left:1465.4px;top:18.8px" width="20.3" height="19.2" viewBox="0 0 20.300 19.200" preserveAspectRatio="none" fill="#c3c6d6"><path fill-rule="evenodd" d="M0 0.300h5.500V1h9.300V0.300h5.500v9h-3.500c-.7 1.900-2.100 3.300-4 3.900-.4.100-.7.200-1.100.300v3.100l3.200 2.600H5.400l3.200-2.600v-3.100c-.4-.1-.7-.2-1.100-.3-1.900-.6-3.300-2-4-3.900H0zM2.500 2.300v5.300h1.600V2.300zM16.200 2.300v5.300h1.600V2.300z"/></svg>
<svg style="left:1500.0px;top:20.5px" width="15.8" height="15.8" viewBox="0 0 24 24" preserveAspectRatio="none" fill="#c3c6d6"><circle cx="3.300" cy="20.700" r="3.300"/><path d="M0 8.200v4.600c6.200 0 11.200 5 11.200 11.200h4.600C15.800 15.300 8.700 8.200 0 8.200zM0 0v4.600c10.700 0 19.400 8.700 19.400 19.400H24C24 10.700 13.300 0 0 0z"/></svg>
<svg style="left:1535.0px;top:19.3px" width="10.8" height="18.7" viewBox="0 0 13 24" preserveAspectRatio="none" fill="#c3c6d6"><path d="M8.400 24V13.100h3.700l.55-4.300H8.400V6.100c0-1.250.35-2.100 2.100-2.100h2.300V.2C12.400.15 11.050 0 9.500 0 6.200 0 4 2 4 5.600v3.200H.3v4.300H4V24z"/></svg>
<svg style="left:1563.7px;top:21.7px" width="19.3" height="13.3" viewBox="0 0 24 17" preserveAspectRatio="none" fill="#c3c6d6"><path d="M23.500 2.650A3 3 0 0 0 21.400.5C19.500 0 12 0 12 0S4.500 0 2.600.5A3 3 0 0 0 .5 2.650C0 4.550 0 8.500 0 8.500s0 3.950.5 5.850a3 3 0 0 0 2.100 2.150c1.900.5 9.400.5 9.400.5s7.500 0 9.400-.5a3 3 0 0 0 2.100-2.150c.5-1.900.5-5.850.5-5.850s0-3.950-.5-5.850zM9.600 12.100V4.900l6.250 3.600z"/></svg>
<svg style="left:1596.3px;top:18.8px" width="19.5" height="19.2" viewBox="0 0 24 24" preserveAspectRatio="none" fill="#c3c6d6"><g fill="none" stroke="#c3c6d6" stroke-width="1.700"><circle cx="12" cy="12" r="10.800"/><ellipse cx="12" cy="12" rx="5.200" ry="10.800"/><path d="M1.200 12h21.600M3 6.300h18M3 17.700h18M12 1.200v21.600"/></g></svg>
<svg style="left:1628.9px;top:20.0px" width="18.0" height="17.2" viewBox="0 0 18 17.200" preserveAspectRatio="none" fill="#c3c6d6"><path d="M1.800 0H15.500Q18 0 18 2.500V14.700Q18 17.200 15.500 17.200H1.500Q0 17.200 0 15.700V1.800z" fill="#d9d9dc"/><path d="M4.400 0V17.200M0 4.100H13.500Q14.600 4.100 14.600 5.200V7.500Q14.600 8.600 13.500 8.600H9.600Q8.600 8.600 8.600 9.600V13.200H18" fill="none" stroke="#222437" stroke-width="1"/></svg>
<svg style="left:1659.1px;top:20.9px" width="31.4" height="16.8" viewBox="0 0 31.400 16.800" preserveAspectRatio="none" fill="#c3c6d6"><path d="M0 8.400L7.400 0H24.800L31.400 8 23.900 16.800H7.700z" fill="#d6d6d9"/><path d="M13.750 -0.300L6.600 8.300 15.100 17.100M12.100 4.300L19.900 13.100M19.500 3.400L28.800 11.800" fill="none" stroke="#222437" stroke-width="1.500" stroke-linecap="round"/></svg>
<svg style="left:1702.8px;top:20.0px" width="19.2" height="15.5" viewBox="2 4 20 16" preserveAspectRatio="none" fill="#c3c6d6"><path d="M20 4H4c-1.100 0-1.990.9-1.990 2L2 18c0 1.100.9 2 2 2h16c1.100 0 2-.9 2-2V6c0-1.100-.9-2-2-2zm0 4l-8 5-8-5V6l8 5 8-5v2z"/></svg>
<div class="a" style="left:1734.600px;top:16.700px;width:45.600px;height:25px;border-radius:13px;background:#171826"></div>
<div class="a" style="left:1735.800px;top:19.800px;width:20.500px;height:20.600px;border-radius:50%;background:#9da1b0;overflow:hidden"><div class="a" style="left:-2.500px;top:-2.500px;width:20.500px;height:20.600px;border-radius:50%;background:#dcdfe6"></div></div>
<div class="a" style="left:1804.1px;top:10.0px;width:36.0px;height:36.0px;border-radius:50%;background:conic-gradient(from 0deg at 50% 52%,#e6e8f5 0deg,#dfe6f5 14deg,#45c9ee 36deg,#8fdcf0 52deg,#d5ecf6 66deg,#fdeaf2 84deg,#c8a8f0 100deg,#efc6e8 116deg,#a5e2ee 136deg,#d8eef5 158deg,#f4f4fb 180deg,#d8eef5 202deg,#62d2ea 224deg,#e6c0ea 244deg,#f3c6e6 258deg,#fff6ea 276deg,#d5ecf6 294deg,#9bdff0 312deg,#7fd8ee 326deg,#dfe6f5 346deg,#e6e8f5 360deg)"></div>
<svg style="left:1804.1px;top:10.0px;overflow:hidden" width="36.0" height="36.0" viewBox="0 0 36 36"><defs><clipPath id="cp1822"><circle cx="18" cy="18" r="18"/></clipPath></defs><g clip-path="url(#cp1822)"><text x="17.600" y="5.400" text-anchor="middle" font-family="Liberation Sans, sans-serif" font-size="4.700" font-weight="bold" fill="#0a0a0a" textLength="21" lengthAdjust="spacingAndGlyphs">PLATINUM</text></g><path d="M9.100 8.600h6.200l2.700 5 2.700-5h6.200l-4.600 8.600h-2.400l-1.900 1.600-1.900-1.600h-2.400z" fill="#000"/><circle cx="18" cy="26.100" r="7.400" fill="#000"/><circle cx="18" cy="17.700" r="1.050" fill="#dfe3ee"/><path d="M18 21.500l1.350 3 3.250.35-2.450 2.150.7 3.200L18 28.550l-2.850 1.650.7-3.200-2.450-2.150 3.250-.35z" fill="#e3e5ef"/></svg>
<svg style="left:1847px;top:26px" width="9" height="5.500" viewBox="0 0 9 5.500"><path d="M0.400 0.500l4.100 4.100L8.600 0.500" fill="none" stroke="#6f7fb6" stroke-width="1.200"/></svg>
<svg style="left:759px;top:678px" width="13" height="20" viewBox="0 0 13 20"><path d="M0.800 0.900V16.300L4.300 13.100 6.800 18.600 9.300 17.500 6.900 12.200 11.400 11.800z" fill="#fff" stroke="#0b0b14" stroke-width="1.100" stroke-linejoin="round"/></svg>
<div class="a" style="left:23.0px;top:79.0px;width:36.0px;height:36.0px;border-radius:50%;background:conic-gradient(from 0deg at 50% 52%,#e6e8f5 0deg,#dfe6f5 14deg,#45c9ee 36deg,#8fdcf0 52deg,#d5ecf6 66deg,#fdeaf2 84deg,#c8a8f0 100deg,#efc6e8 116deg,#a5e2ee 136deg,#d8eef5 158deg,#f4f4fb 180deg,#d8eef5 202deg,#62d2ea 224deg,#e6c0ea 244deg,#f3c6e6 258deg,#fff6ea 276deg,#d5ecf6 294deg,#9bdff0 312deg,#7fd8ee 326deg,#dfe6f5 346deg,#e6e8f5 360deg)"></div>
<svg style="left:23.0px;top:79.0px;overflow:hidden" width="36.0" height="36.0" viewBox="0 0 36 36"><defs><clipPath id="cp41"><circle cx="18" cy="18" r="18"/></clipPath></defs><g clip-path="url(#cp41)"><text x="17.600" y="5.400" text-anchor="middle" font-family="Liberation Sans, sans-serif" font-size="4.700" font-weight="bold" fill="#0a0a0a" textLength="21" lengthAdjust="spacingAndGlyphs">PLATINUM</text></g><path d="M9.100 8.600h6.200l2.700 5 2.700-5h6.200l-4.600 8.600h-2.400l-1.900 1.600-1.900-1.600h-2.400z" fill="#000"/><circle cx="18" cy="26.100" r="7.400" fill="#000"/><circle cx="18" cy="17.700" r="1.050" fill="#dfe3ee"/><path d="M18 21.500l1.350 3 3.250.35-2.450 2.150.7 3.200L18 28.550l-2.850 1.650.7-3.200-2.450-2.150 3.250-.35z" fill="#e3e5ef"/></svg>
</body>
</html>
